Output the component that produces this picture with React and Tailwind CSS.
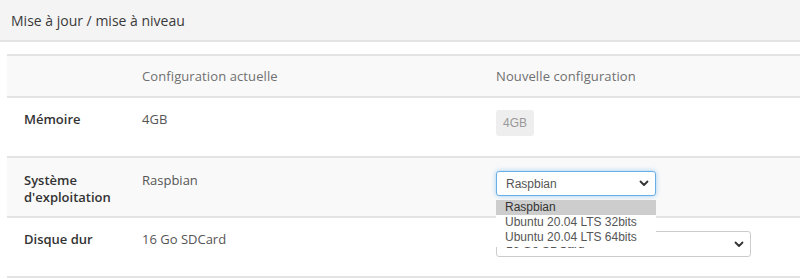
import React from "react";

const font = { fontFamily: '"Open Sans", "Noto Sans", sans-serif' };
const arial = { fontFamily: '"Liberation Sans", Arial, sans-serif' };

function Chevron() {
  return (
    <svg width="10" height="7" viewBox="0 0 10 7" className="shrink-0">
      <path d="M1.5 1.5 L5 5 L8.5 1.5" fill="none" stroke="#333" strokeWidth="1.8" strokeLinecap="round" strokeLinejoin="round" />
    </svg>
  );
}

export default function App() {
  return (
    <div className="w-[800px] h-[279px] bg-white overflow-hidden text-[13px]" style={font}>
      <div className="h-[42px] bg-[#f4f4f4] border-b-2 border-[#e3e3e3] flex items-center pl-[11px]">
        <span className="text-[14px] text-[#3a3a3a]">Mise à jour / mise à niveau</span>
      </div>
      <div className="ml-[7px] mt-[12px]">
        {/* header row */}
        <div className="grid grid-cols-[118px_354px_1fr] h-[44px] bg-[#f9f9f9] border-t-2 border-b-2 border-[#e3e3e3] items-center text-[#707070] pt-[2px] tracking-[0.1px]">
          <div />
          <div className="pl-[17px]">Configuration actuelle</div>
          <div className="pl-[17px]">Nouvelle configuration</div>
        </div>
        {/* Memoire */}
        <div className="grid grid-cols-[118px_354px_1fr] h-[60px] border-b-2 border-[#e3e3e3]">
          <div className="pl-[17px] pt-[12px] font-semibold text-[#333]">Mémoire</div>
          <div className="pl-[17px] pt-[12px] text-[#555]">4GB</div>
          <div className="pl-[17px] pt-[12px]">
            <div className="inline-flex items-end h-[26px] px-[7px] pb-[4px] bg-[#eeeeee] rounded-[3px] text-[12px] text-[#999]" style={arial}>4GB</div>
          </div>
        </div>
        {/* Systeme */}
        <div className="grid grid-cols-[118px_354px_1fr] h-[60px] bg-[#f9f9f9] border-b-2 border-[#e3e3e3]">
          <div className="pl-[17px] pt-[14px] font-semibold text-[#333] leading-[17px]">Système<br />d'exploitation</div>
          <div className="pl-[17px] pt-[14px] text-[#555] leading-[17px]">Raspbian</div>
          <div className="pl-[17px] pt-[13px] relative">
            <div className="w-[160px] h-[25px] bg-white border border-[#66afe9] rounded-[3px] shadow-[0_0_5px_rgba(102,175,233,0.6)] flex items-center justify-between pl-[9px] pr-[6px] text-[12px] text-[#555]" style={arial}>
              <span>Raspbian</span>
              <Chevron />
            </div>
            <div className="absolute left-[17px] top-[42px] w-[160px] bg-white z-10 text-[12px] text-[#555] leading-[15px]" style={arial}>
              <div className="bg-[#cdcdcd] h-[15px] pl-[9px] text-[#333]">Raspbian</div>
              <div className="pl-[9px]">Ubuntu 20.04 LTS 32bits</div>
              <div className="pl-[9px] pb-[2px]">Ubuntu 20.04 LTS 64bits</div>
            </div>
          </div>
        </div>
        {/* Disque */}
        <div className="grid grid-cols-[118px_354px_1fr] h-[60px] border-b-2 border-[#e3e3e3]">
          <div className="pl-[17px] pt-[12px] font-semibold text-[#333]">Disque dur</div>
          <div className="pl-[17px] pt-[12px] text-[#555]">16 Go SDCard</div>
          <div className="pl-[17px] pt-[13px]">
            <div className="w-[255px] h-[26px] bg-white border border-[#ccc] rounded-[3px] flex items-center justify-between pl-[9px] pr-[6px] text-[12px] text-[#555]" style={arial}>
              <span>16 Go SDCard</span>
              <Chevron />
            </div>
          </div>
        </div>
      </div>
    </div>
  );
}
